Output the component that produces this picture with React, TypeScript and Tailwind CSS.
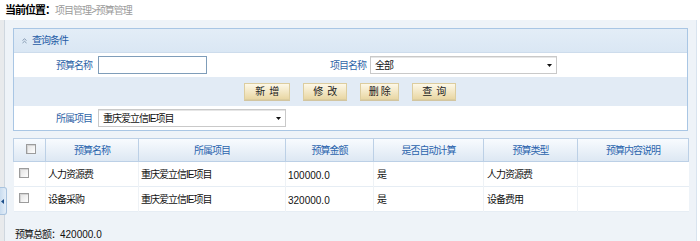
const rows = [
  { name: "人力资源费", project: "重庆爱立信IE项目", amount: "100000.0", auto: "是", type: "人力资源费", desc: "" },
  { name: "设备采购", project: "重庆爱立信IE项目", amount: "320000.0", auto: "是", type: "设备费用", desc: "" },
];

const heads = ["预算名称", "所属项目", "预算金额", "是否自动计算", "预算类型", "预算内容说明"];

function Check() {
  return (
    <span className="inline-block w-[10px] h-[10px] border border-[#9c9c9c] bg-gradient-to-br from-[#e2e2e2] to-white shadow-[inset_1px_1px_0_#d4d4d4]" />
  );
}

function Caret() {
  return (
    <svg width="5" height="3" viewBox="0 0 5 3" className="shrink-0">
      <path d="M0 0h5L2.5 3z" fill="#111" />
    </svg>
  );
}

function Select({ value, w }: { value: string; w: string }) {
  return (
    <div className={`${w} h-[18px] flex items-center justify-between pl-[4px] pr-[4px] bg-white border border-[#c9c9c9] shadow-[inset_0_1px_0_#e6e6e6] tracking-[-1px] text-[#111]`}>
      <span>{value}</span>
      <Caret />
    </div>
  );
}

function Btn({ label, w }: { label: string; w: string }) {
  return (
    <div className={`${w} h-[17px] flex items-center justify-center bg-gradient-to-b from-[#fdf8e8] to-[#e9d7a4] border border-[#dccd9f] shadow-[0_1px_0_#d2c5a0] text-[#222] whitespace-pre`}>
      {label}
    </div>
  );
}

export default function App() {
  return (
    <div className="w-[700px] h-[241px] overflow-hidden bg-white font-['Liberation_Sans','Noto_Sans_CJK_SC',sans-serif] text-[10px] text-[#111]">
      <div className="h-[20px] flex items-center pl-[5px]">
        <span className="text-[11px] font-bold tracking-[-1px] text-black">当前位置：</span>
        <span className="text-[#9a9a9a] tracking-[-1px]">项目管理&gt;预算管理</span>
      </div>

      <div className="flex h-[221px]">
        <div className="relative w-[5px] bg-[#e8eaec] border-r border-[#cfd7df]">
          <div className="absolute left-0 top-[167px] w-[7px] h-[28px] rounded-r-[3px] bg-gradient-to-r from-[#c9dcef] to-[#e4eef8] border border-l-0 border-[#a9c3de] flex items-center pl-[1px]">
            <svg width="3" height="5" viewBox="0 0 3 5">
              <path d="M3 0v5L0 2.5z" fill="#1d4f8a" />
            </svg>
          </div>
        </div>

        <div className="w-[692px] bg-[#eef3f8] border-r border-[#d9e4ef] pt-[8px] pl-[8px] pr-[8px]">
          <div className="border border-[#a9c6e4]">
            <div className="h-[24px] flex items-center pl-[8px] gap-[5px] bg-gradient-to-b from-[#e3edf7] to-[#dae7f4] border-b border-[#cddcec]">
              <svg width="5" height="6" viewBox="0 0 5 6">
                <path d="M0.5 2.5L2.5 0.8L4.5 2.5M0.5 5L2.5 3.3L4.5 5" stroke="#7d93ab" strokeWidth="0.9" fill="none" />
              </svg>
              <span className="text-[#1f5ba6] tracking-[-1px]">查询条件</span>
            </div>

            <div className="h-[24px] flex items-center bg-white">
              <div className="w-[84px] text-right pr-[6px] text-[#2f65a8] tracking-[-1px]">预算名称</div>
              <div className="w-[109px] h-[18px] bg-white border border-[#7f9db9]" />
              <div className="w-[163px] text-right pr-[4px] text-[#2f65a8] tracking-[-1px]">项目名称</div>
              <Select value="全部" w="w-[187px]" />
            </div>

            <div className="h-[29px] flex items-center gap-[13px] pl-[230px] bg-[#e2ebf5] tracking-[-0.5px]">
              <Btn label="新  增" w="w-[46px]" />
              <Btn label="修  改" w="w-[44px]" />
              <Btn label="删 除" w="w-[39px]" />
              <Btn label="查  询" w="w-[44px]" />
            </div>

            <div className="h-[24px] flex items-center bg-white">
              <div className="w-[84px] text-right pr-[6px] text-[#2f65a8] tracking-[-1px]">所属项目</div>
              <Select value="重庆爱立信IE项目" w="w-[188px]" />
            </div>
          </div>

          <table className="mt-[7px] w-[675px] table-fixed">
            <colgroup>
              <col className="w-[32px]" />
              <col className="w-[93px]" />
              <col className="w-[147px]" />
              <col className="w-[88px]" />
              <col className="w-[110px]" />
              <col className="w-[94px]" />
              <col className="w-[111px]" />
            </colgroup>
            <thead>
              <tr className="h-[23px] bg-gradient-to-b from-[#f8fbfe] to-[#dce7f3]">
                <th className="border border-[#bcd0e6] text-center align-middle p-0">
                  <span className="inline-flex pt-[2px] pl-[2px]">
                    <Check />
                  </span>
                </th>
                {heads.map((h) => (
                  <th key={h} className="border border-[#bcd0e6] font-normal text-[#2a64ad] text-center tracking-[-1px] p-0">
                    {h}
                  </th>
                ))}
              </tr>
            </thead>
            <tbody>
              {rows.map((r) => (
                <tr key={r.name} className="h-[25px] bg-white border-b border-[#e6edf4]">
                  <td className="p-0 pl-[5px] border-r border-[#eef2f6] align-middle">
                    <span className="inline-flex pt-[2px]">
                      <Check />
                    </span>
                  </td>
                  <td className="pl-[2px] border-r border-[#eef2f6] tracking-[-1px]">{r.name}</td>
                  <td className="pl-[2px] border-r border-[#eef2f6] tracking-[-1px]">{r.project}</td>
                  <td className="pl-[2px] border-r border-[#eef2f6] pt-[2px]">{r.amount}</td>
                  <td className="pl-[3px] border-r border-[#eef2f6]">{r.auto}</td>
                  <td className="pl-[3px] border-r border-[#eef2f6] tracking-[-1px]">{r.type}</td>
                  <td className="pl-[3px]">{r.desc}</td>
                </tr>
              ))}
            </tbody>
          </table>

          <div className="mt-[17px] pl-[2px] leading-[12px]">
            <span className="tracking-[-1px]">预算总额：</span>
            <span>420000.0</span>
          </div>
        </div>
      </div>
    </div>
  );
}
